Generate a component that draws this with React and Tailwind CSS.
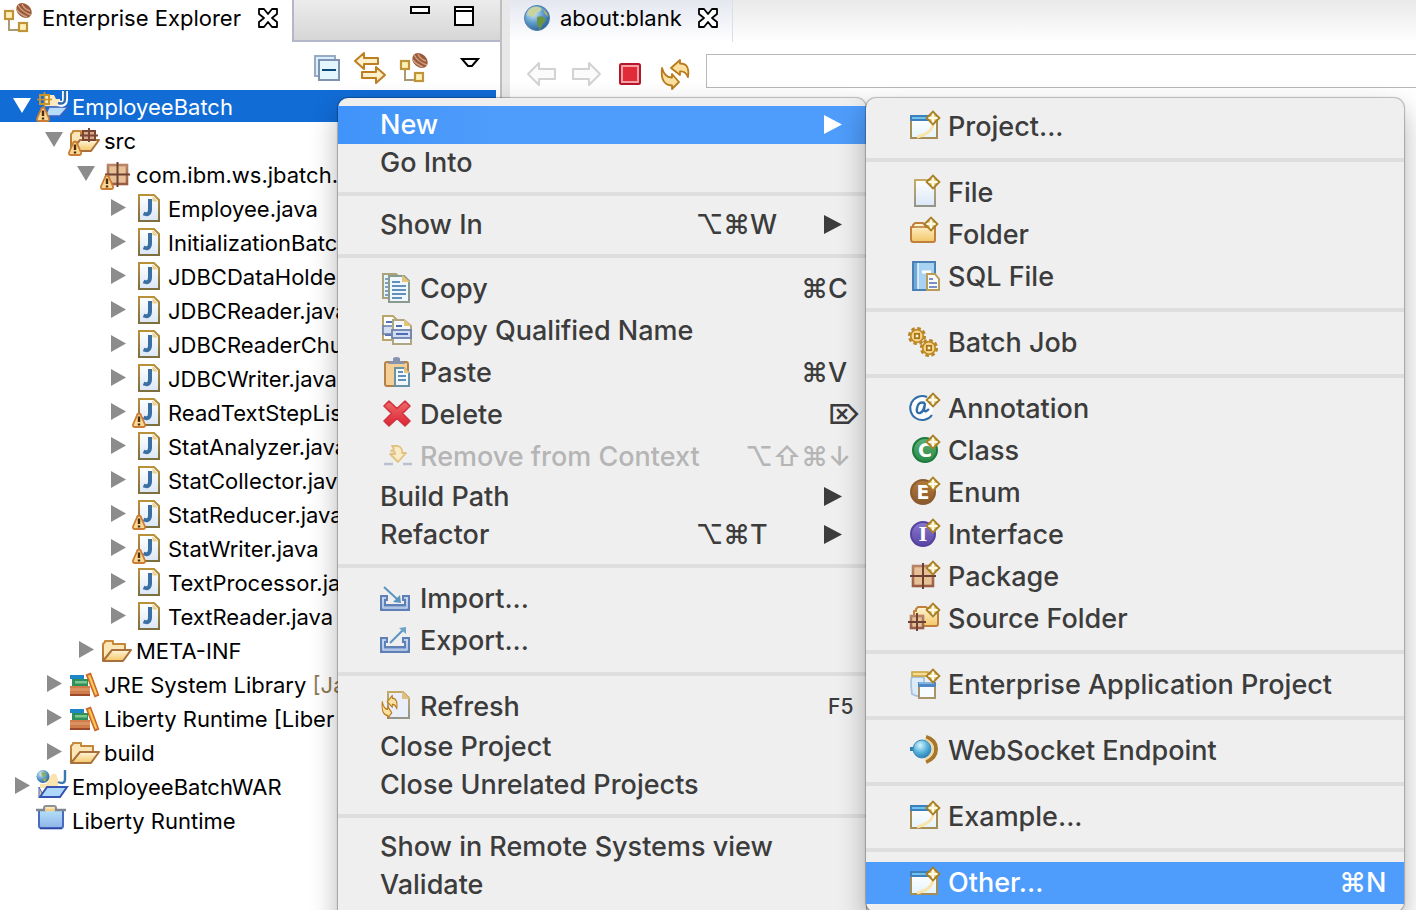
import React from "react";

/* ---------- shared drawing parts ---------- */

function Defs() {
  const g = (id, a, b) => (
    <linearGradient id={id} x1="0" y1="0" x2="0" y2="1">
      <stop offset="0" stopColor={a} />
      <stop offset="1" stopColor={b} />
    </linearGradient>
  );
  return (
    <svg className="absolute size-0" aria-hidden="true">
      <defs>
        {g("paper", "#ffffff", "#dbe6f6")}
        {g("paperEdge", "#b8913a", "#7d6f3e")}
        {g("softEdge", "#c4ab62", "#94948a")}
        {g("gold", "#fff6da", "#f3c766")}
        {g("goldEdge", "#c98a3c", "#a8742a")}
        {g("blue", "#cfe8fb", "#8fbdf0")}
        {g("case", "#b5e0f8", "#8fb4ea")}
        {g("pack", "#b98468", "#9b5c44")}
        {g("red", "#ef6a6a", "#dc2434")}
        {g("green", "#5cb176", "#2a8a46")}
        {g("brown", "#b5783a", "#8a5a2a")}
        {g("purple", "#8a7ad0", "#5a44a4")}
        {g("tray", "#c5d6ef", "#7f9dcd")}
        {g("win", "#ffffff", "#e3f4fd")}
        <radialGradient id="globe" cx="0.35" cy="0.3" r="0.8">
          <stop offset="0" stopColor="#d6ecf7" />
          <stop offset="0.5" stopColor="#5d9ccb" />
          <stop offset="1" stopColor="#25588f" />
        </radialGradient>
        <radialGradient id="ball" cx="0.4" cy="0.3" r="0.8">
          <stop offset="0" stopColor="#d9f4fd" />
          <stop offset="0.5" stopColor="#58b3dc" />
          <stop offset="1" stopColor="#1d6ea5" />
        </radialGradient>
      </defs>
    </svg>
  );
}

function Icon({ children }) {
  return (
    <svg viewBox="0 0 32 32" className="size-8 shrink-0 overflow-visible" aria-hidden="true">
      {children}
    </svg>
  );
}

const Spark = ({ x = 25, y = 7 }) => (
  <g transform={`translate(${x} ${y})`}>
    <path d="M0 -6.3L6.3 0L0 6.3L-6.3 0Z" fill="#ecd28c" stroke="#a87f24" strokeWidth="2" />
    <path d="M0 -4.500V4.500M-4.500 0H4.500" stroke="#fffbe8" strokeWidth="2.200" />
  </g>
);

const Warn = () => (
  <g>
    <path d="M7 17.5Q8.6 17.5 9.3 20L13 28.5Q13.6 31 11 31H3Q0.4 31 1 28.5L4.7 20Q5.4 17.5 7 17.5Z" fill="#fbd893" stroke="#cb7c35" strokeWidth="1.8" />
    <path d="M7 20.5V26M7 27.5V29.5" stroke="#4a2a08" strokeWidth="2.4" />
  </g>
);

const Letter = ({ x, y, size, fill, font, children }) => (
  <text x={x} y={y} fontSize={size} fontWeight="700" fill={fill} textAnchor="middle" fontFamily={`"${font}", sans-serif`}>
    {children}
  </text>
);

const Grid = ({ x, y, s }) => (
  <g transform={`translate(${x} ${y})`}>
    <rect x="1" y="1" width={s - 2} height={s - 2} fill="#e6c196" stroke="url(#pack)" strokeWidth="2.6" />
    <path d={`M${s / 2} -2V${s + 2}M-2 ${s / 2}H${s + 2}`} stroke="#6d4034" strokeWidth="2" />
  </g>
);

const OpenFolder = () => (
  <g strokeLinejoin="round" strokeWidth="2">
    <path d="M3 27V10L5 8V7H13V10H25V15" fill="#fbe6b8" stroke="url(#goldEdge)" />
    <path d="M3 27L12 16H31L23 27Z" fill="url(#gold)" stroke="#a8703a" />
  </g>
);

/* ---------- tree icons ---------- */

const JavaIcon = ({ warn }) => (
  <Icon>
    <path d="M7 3H22L27 8V29H7Z" fill="url(#paper)" stroke="url(#paperEdge)" strokeWidth="2" />
    <path d="M20.500 4V9.500H26Z" fill="#ecd08c" />
    <path d="M11.500 21.500Q18 24 18 17V7" fill="none" stroke="#3a6fa3" strokeWidth="4" />
    {warn && <Warn />}
  </Icon>
);

const ProjectIcon = () => (
  <Icon>
    <path d="M8 16V5H18L20 9H24V17Z" fill="#fde9bd" />
    <path d="M9 26L13 17H32L24 26Z" fill="#b5dcf8" stroke="#3d5fc0" strokeWidth="1.6" />
    <rect x="4" y="5" width="9" height="9" fill="none" stroke="#c8932c" strokeWidth="2" />
    <path d="M8.500 2V17M1 9.500H16" stroke="#c8932c" strokeWidth="1.600" />
    <path d="M22 13Q29 16 29 9V1" fill="none" stroke="#fff" strokeWidth="6" />
    <path d="M22 13Q29 15 29 9V0" fill="none" stroke="#2f6aa8" strokeWidth="2.400" />
    <Warn />
  </Icon>
);

const SrcIcon = () => (
  <Icon>
    <OpenFolder />
    <path d="M15 7H27V16H15ZM21 4V18M12 11.500H30" fill="#d9a988" stroke="#7a4636" strokeWidth="2" />
    <Warn />
  </Icon>
);

const PackageIcon = ({ warn }) => (
  <Icon>
    <Grid x={7} y={6} s={21} />
    {warn && <Warn />}
  </Icon>
);

const FolderIcon = () => (
  <Icon>
    <OpenFolder />
  </Icon>
);

const BooksIcon = () => (
  <Icon>
    <rect x="2" y="7" width="14" height="4" fill="#1e86c8" />
    <rect x="4" y="11" width="16" height="7" fill="#2f8f58" />
    <rect x="7" y="13" width="12" height="2.500" fill="#7cc893" />
    <rect x="2" y="18" width="20" height="8" fill="#cf7d4b" />
    <rect x="2" y="20" width="20" height="3" fill="#da9262" />
    <rect x="2" y="26" width="20" height="2" fill="#9c4a2a" />
    <path d="M18.500 7L22.500 5.500L30.500 27L27 28.500Z" fill="#eea53c" stroke="#c8652a" strokeWidth="1.400" />
    <path d="M21.500 8L28 26" stroke="#fbd25c" strokeWidth="1.400" />
  </Icon>
);

const WarIcon = () => (
  <Icon>
    <path d="M4 20V14H10L16 4H20L22 9V18H4Z" fill="#fbe3b0" />
    <path d="M3 27V17L8 27Z" fill="#f3d08c" stroke="#4a62b8" strokeWidth="1" />
    <path d="M4 27L11 17H31L24 27Z" fill="#aed8fa" stroke="#3552b5" strokeWidth="2" />
    <circle cx="7" cy="6.500" r="6.500" fill="url(#globe)" />
    <path d="M5 3L9 2L10 6L7 7ZM6 9L11 8L9 12Z" fill="#8fae56" />
    <path d="M22 12Q29 15 29 9V0" fill="none" stroke="#3b78ad" strokeWidth="2.400" />
  </Icon>
);

const CaseIcon = () => (
  <Icon>
    <path d="M8 6V4Q8 2 10 2H18Q20 2 20 4V6" fill="#fde6b6" stroke="#8a9198" strokeWidth="2" />
    <path d="M3 6H27V22Q27 24 25 24H5Q3 24 3 22Z" fill="url(#case)" stroke="#4a6cc0" strokeWidth="2" />
    <path d="M0 6H10M18 6H30" stroke="#7d8791" strokeWidth="2.400" />
    <path d="M9 6H19" stroke="#f3cf8a" strokeWidth="2.400" />
    <path d="M4 24.500H26" stroke="#2c47a4" strokeWidth="1.600" />
  </Icon>
);

/* ---------- toolbar and tab icons ---------- */

const TreeViewIcon = () => (
  <Icon>
    <path d="M7 16V28H18" fill="none" stroke="#a99a72" strokeWidth="2" />
    <rect x="3" y="9" width="8" height="8" fill="#fdf0b8" stroke="#c09438" strokeWidth="2.200" />
    <rect x="17" y="21" width="8" height="8" fill="#fdf0b8" stroke="#c09438" strokeWidth="2.200" />
    <ellipse cx="22" cy="8.500" rx="8.500" ry="6.500" transform="rotate(40 22 8.500)" fill="#9a5a3a" />
    <path d="M16 3Q20 10 29 13M20 2Q22 7 28 9M15 8Q19 13 25 15" fill="none" stroke="#d2a184" strokeWidth="1.400" />
  </Icon>
);

const CollapseIcon = () => (
  <Icon>
    <rect x="5" y="4" width="20" height="20" fill="#d6f0fc" stroke="#9aa9c4" strokeWidth="2" />
    <rect x="9" y="8" width="20" height="20" fill="#e4f6fd" stroke="#8192b0" strokeWidth="2" />
    <path d="M12 18H26" stroke="#0d4678" strokeWidth="2" />
  </Icon>
);

const LinkIcon = () => (
  <Icon>
    <g fill="#fdf0cb" stroke="#bd7f22" strokeWidth="2" strokeLinejoin="round">
      <path d="M10 1L1 9L10 17V12H24V6H10Z" />
      <path d="M22 15L31 23L22 31V26H8V20H22Z" />
    </g>
  </Icon>
);

const NavArrow = ({ flip }) => (
  <Icon>
    <path
      d={flip ? "M19 5L30 16L19 27V21H3V11H19Z" : "M13 5L2 16L13 27V21H29V11H13Z"}
      fill="#fbfbfb"
      stroke="#d2d2d2"
      strokeWidth="2"
      strokeLinejoin="round"
    />
  </Icon>
);

const StopIcon = () => (
  <Icon>
    <rect x="6" y="6" width="20" height="20" rx="1.500" fill="#f3a3a5" stroke="#b8162c" strokeWidth="2" />
    <rect x="9" y="9" width="14" height="14" fill="#e22b38" />
  </Icon>
);

const Swirl = () => (
  <g fill="#fbe0a0" stroke="#b97a1c" strokeWidth="1.800" strokeLinejoin="round">
    <path d="M22 2L13 10L22 17V13.500Q27 12.500 30 19Q32 5 22 5.500Z" />
    <path d="M14 16L21 24L14 31V27.500Q2 27 4 10Q7 20 14 19.500Z" />
  </g>
);

const CloseX = () => (
  <svg viewBox="0 0 20 20" className="size-5" aria-hidden="true">
    <path d="M1 1H6L10 6L14 1H19V6L14 10L19 14V19H14L10 14L6 19H1V14L6 10L1 6Z" fill="#fff" stroke="#000" strokeWidth="1.800" strokeLinejoin="round" />
  </svg>
);

const GlobeIcon = () => (
  <svg viewBox="0 0 26 26" className="size-[26px]" aria-hidden="true">
    <circle cx="13" cy="13" r="12.500" fill="url(#globe)" stroke="#4e7fae" strokeWidth="1" />
    <path d="M4 6Q8 1 15 2L18 4L15 7L12 8L11 11L8 12L6 10L3 11Z" fill="#c9d3a0" />
    <path d="M13 12L18 11L22 15L18 20L16 25L13 19Z" fill="#6d9440" />
    <path d="M19 4L23 8L24 12L21 9Z" fill="#b9b56c" />
  </svg>
);

/* ---------- menu icons ---------- */

const CopyIcon = () => (
  <Icon>
    <path d="M3 1H16L20 5V25H3Z" fill="#e5f3fb" stroke="#a9a27a" strokeWidth="2" />
    <path d="M5 6H8M5 10H8M5 14H8M5 18H8M5 22H8" stroke="#5e86ac" strokeWidth="1.600" />
    <path d="M9 3H24L29 8V29H9Z" fill="#eef7fd" stroke="#8a9a8c" strokeWidth="2" />
    <path d="M22 2V9H30Z" fill="#e6c676" />
    <path d="M12 9H20M12 13H26M12 17H26M12 21H26M12 25H22" stroke="#6390b8" strokeWidth="1.800" />
  </Icon>
);

const CopyNameIcon = () => (
  <Icon>
    <path d="M3 1H13L19 7V25H3Z" fill="#fff" stroke="#b9a66a" strokeWidth="2" />
    <path d="M6 7H12M5 16H12M5 20H12" stroke="#5773b5" strokeWidth="1.800" />
    <rect x="3" y="11" width="15" height="8" fill="#d4def2" stroke="#7182ac" strokeWidth="1.600" />
    <path d="M13 5H24L31 11V29H13Z" fill="#f4f8fd" stroke="#b0a680" strokeWidth="2" />
    <path d="M24 4V11H31Z" fill="#e6c676" />
    <rect x="12" y="15" width="19" height="8" fill="#cfdcf2" stroke="#6f80aa" strokeWidth="1.800" />
    <path d="M16 11H22M16 19H28" stroke="#4f6cb2" strokeWidth="1.800" />
  </Icon>
);

const PasteIcon = () => (
  <Icon>
    <rect x="5" y="5" width="23" height="24" rx="2" fill="#f4d096" stroke="#b3814c" strokeWidth="2" />
    <path d="M8 7H25L23 4H20V2Q20 0 16.500 0Q13 0 13 2V4H10Z" fill="#8793ae" />
    <path d="M15 11H24L29 16V29H15Z" fill="#f2f9fd" stroke="#6b93a8" strokeWidth="2" />
    <path d="M24 10V16H30Z" fill="#e6c676" />
    <path d="M18 15H23M18 19H26M18 23H26" stroke="#6390b8" strokeWidth="1.800" />
  </Icon>
);

const DeleteIcon = () => (
  <Icon>
    <path d="M9 2L17 9.500L25 2L30 7L22.500 14.500L30 22L25 27L17 19.500L9 27L4 22L11.500 14.500L4 7Z" fill="url(#red)" stroke="#d03440" strokeWidth="1.600" strokeLinejoin="round" />
  </Icon>
);

const RemoveIcon = () => (
  <Icon>
    <path d="M4 23H13M23 23H32" stroke="#b9c0cf" strokeWidth="2.400" />
    <path d="M12 5H18Q23 7 22 12H26L18 21L10 13H15Q16 10 11 10L14 8Z" fill="#f8ebc6" stroke="#e2c282" strokeWidth="1.800" strokeLinejoin="round" />
  </Icon>
);

const Tray = () => (
  <g>
    <path d="M1 13H7V17H5V22H25V17H23V13H29V27H1Z" fill="url(#tray)" stroke="#5f80b6" strokeWidth="2" />
    <path d="M3 15V25H27V15" fill="none" stroke="#d5e2f5" strokeWidth="1" />
  </g>
);

const ImportIcon = () => (
  <Icon>
    <Tray />
    <path d="M4 4L17 16" stroke="#5a94bf" strokeWidth="2" />
    <path d="M21 20L13 19L20 12Z" fill="#5a94bf" />
  </Icon>
);

const ExportIcon = () => (
  <Icon>
    <Tray />
    <path d="M10 18L23 5" stroke="#5a94bf" strokeWidth="2" />
    <path d="M26 2V9L19 3Z" fill="#6fa3c8" />
  </Icon>
);

const RefreshDocIcon = () => (
  <Icon>
    <path d="M8 1H23L29 7V27H8Z" fill="#e9eef9" stroke="url(#softEdge)" strokeWidth="2" />
    <path d="M22 0V8H30Z" fill="#dcc182" />
    <g transform="translate(0 3) scale(0.560 0.780)">
      <Swirl />
    </g>
  </Icon>
);

const WizardIcon = () => (
  <Icon>
    <rect x="3" y="7" width="26" height="20" fill="url(#win)" stroke="#a58d55" strokeWidth="2" />
    <path d="M25 12Q25 22 9 26" fill="none" stroke="#fbe3ac" strokeWidth="3" />
    <rect x="2" y="4" width="20" height="6" fill="#3f7fbb" />
    <rect x="4" y="6" width="17" height="2" fill="#6cc3ec" />
    <Spark />
  </Icon>
);

const FileIcon = () => (
  <Icon>
    <rect x="7" y="3" width="20" height="26" fill="url(#paper)" stroke="url(#softEdge)" strokeWidth="2" />
    <Spark y={5} />
  </Icon>
);

const ClosedFolder = () => (
  <path d="M3 8V20Q3 23 5 23H25Q27 23 27 21V8H17V6L15 4H7L5 6V8Z" fill="url(#gold)" stroke="#c0803c" strokeWidth="2" strokeLinejoin="round" />
);

const NewFolderIcon = () => (
  <Icon>
    <ClosedFolder />
    <path d="M5 8H16" stroke="#c0803c" strokeWidth="1.600" />
    <Spark x={23} y={5} />
  </Icon>
);

const SqlIcon = () => (
  <Icon>
    <rect x="5" y="1" width="22" height="28" fill="#a7d2f2" stroke="#4a80b4" strokeWidth="2" />
    <rect x="6" y="2" width="4" height="26" fill="#6faad8" />
    <path d="M10 2V28" stroke="#e6f4fd" strokeWidth="1.600" />
    <path d="M14 11H23" stroke="#fff" strokeWidth="3" />
    <path d="M19 13H27L31 18V29H19Z" fill="#fbfbf6" stroke="#b99c58" strokeWidth="2" />
    <path d="M21 18H25M21 22H29M21 26H29" stroke="#7b90c8" strokeWidth="1.800" />
  </Icon>
);

const Gear = ({ x, y }) => (
  <g transform={`translate(${x} ${y})`}>
    <circle r="7.600" fill="none" stroke="#b8862a" strokeWidth="3" strokeDasharray="3.500 2.470" />
    <circle r="6.300" fill="#f9d98b" stroke="#c08a26" strokeWidth="1.800" />
    <rect x="-2.200" y="-2.200" width="4.400" height="4.400" fill="#fff3d0" stroke="#a8741a" strokeWidth="1.800" />
  </g>
);

const GearsIcon = () => (
  <Icon>
    <Gear x={9} y={9} />
    <Gear x={21} y={21} />
  </Icon>
);

const AnnotationIcon = () => (
  <Icon>
    <circle cx="14" cy="15" r="11" fill="#fff" />
    <path d="M24 22A12 12 0 1 1 19 4" fill="none" stroke="#2f6ea8" strokeWidth="2" />
    <path d="M17 10Q10 8 9 15Q8 21 12 20Q16 19 17 10L16 17Q17 20 21 16" fill="none" stroke="#2f6ea8" strokeWidth="2.400" />
    <Spark />
  </Icon>
);

const LetterIcon = ({ x, fill, edge, letter, font = "DejaVu Sans" }) => (
  <Icon>
    <circle cx={x} cy="15" r="12" fill={fill} stroke={edge} strokeWidth="2" />
    <Letter x={x} y="22" size="19" fill="#fff" font={font}>
      {letter}
    </Letter>
    <Spark />
  </Icon>
);

const NewPackageIcon = () => (
  <Icon>
    <Grid x={4} y={4} s={22} />
    <Spark />
  </Icon>
);

const SourceFolderIcon = () => (
  <Icon>
    <g transform="translate(3 0)">
      <ClosedFolder />
    </g>
    <Grid x={2} y={12} s={14} />
    <Spark />
  </Icon>
);

const EnterpriseIcon = () => (
  <Icon>
    <path d="M4 8Q2 10 4 25L9 27H16V8Z" fill="#dcebf8" stroke="#a9c2dc" strokeWidth="1.800" />
    <rect x="4" y="3" width="16" height="4" fill="#f5dd94" stroke="#cda545" strokeWidth="1.600" />
    <rect x="11" y="16" width="16" height="13" fill="#f6fbff" stroke="#a89468" strokeWidth="2" />
    <rect x="10" y="13" width="18" height="5" fill="#4f87c4" />
    <path d="M11 14H26" stroke="#9fc7ea" strokeWidth="1.400" />
    <Spark />
  </Icon>
);

const SocketIcon = () => (
  <Icon>
    <path d="M18 2Q28 5 28 14Q28 23 18 27" fill="none" stroke="#a8762a" strokeWidth="4" />
    <path d="M17 4Q25 8 25 14Q25 20 17 25" fill="none" stroke="#f1d79c" strokeWidth="2" />
    <path d="M2 14H8" stroke="#2c7fb0" strokeWidth="4" />
    <circle cx="14" cy="14" r="9" fill="url(#ball)" stroke="#3b8cba" strokeWidth="1" />
  </Icon>
);

/* ---------- tree ---------- */

const TREE = [
  { level: 0, open: true, icon: <ProjectIcon />, label: "EmployeeBatch", selected: true },
  { level: 1, open: true, icon: <SrcIcon />, label: "src" },
  { level: 2, open: true, icon: <PackageIcon warn />, label: "com.ibm.ws.jbatch." },
  { level: 3, icon: <JavaIcon />, label: "Employee.java" },
  { level: 3, icon: <JavaIcon />, label: "InitializationBatc" },
  { level: 3, icon: <JavaIcon />, label: "JDBCDataHolde" },
  { level: 3, icon: <JavaIcon />, label: "JDBCReader.java" },
  { level: 3, icon: <JavaIcon />, label: "JDBCReaderChu" },
  { level: 3, icon: <JavaIcon />, label: "JDBCWriter.java" },
  { level: 3, icon: <JavaIcon warn />, label: "ReadTextStepLis" },
  { level: 3, icon: <JavaIcon />, label: "StatAnalyzer.java" },
  { level: 3, icon: <JavaIcon />, label: "StatCollector.jav" },
  { level: 3, icon: <JavaIcon warn />, label: "StatReducer.java" },
  { level: 3, icon: <JavaIcon warn />, label: "StatWriter.java" },
  { level: 3, icon: <JavaIcon />, label: "TextProcessor.ja" },
  { level: 3, icon: <JavaIcon />, label: "TextReader.java" },
  { level: 2, icon: <FolderIcon />, label: "META-INF" },
  { level: 1, icon: <BooksIcon />, label: "JRE System Library", note: "[Ja" },
  { level: 1, icon: <BooksIcon />, label: "Liberty Runtime [Liber" },
  { level: 1, icon: <FolderIcon />, label: "build" },
  { level: 0, icon: <WarIcon />, label: "EmployeeBatchWAR" },
  { level: 0, leaf: true, icon: <CaseIcon />, label: "Liberty Runtime" },
];

const INDENT = ["pl-3", "pl-11", "pl-[76px]", "pl-[108px]"];

function TreeRow({ level, open, leaf, icon, label, note, selected }) {
  return (
    <li
      role="treeitem"
      aria-level={level + 1}
      aria-expanded={leaf ? undefined : !!open}
      aria-selected={!!selected}
      className={`flex h-[34px] items-center gap-1 whitespace-nowrap border-y border-transparent bg-clip-padding ${INDENT[level]} ${
        selected ? "bg-[#116cd6] text-white" : "text-black"
      }`}
    >
      <svg viewBox="0 0 20 20" className={`size-5 shrink-0 ${selected ? "fill-white" : "fill-[#8c8c8c]"}`} aria-hidden="true">
        {!leaf && <path d={open ? "M1 2H19L10 17Z" : "M3 1L18 9.500L3 18Z"} />}
      </svg>
      {icon}
      <span className="pt-[2px]">
        {label}
        {note && <span className="text-[#8f7a52]"> {note}</span>}
      </span>
    </li>
  );
}

/* ---------- menus ---------- */

const MAIN_MENU = [
  [{ label: "New", sub: true, active: true }, { label: "Go Into" }],
  [{ label: "Show In", mods: "⌥⌘", k: "W", sub: true }],
  [
    { label: "Copy", icon: <CopyIcon />, mods: "⌘", k: "C" },
    { label: "Copy Qualified Name", icon: <CopyNameIcon /> },
    { label: "Paste", icon: <PasteIcon />, mods: "⌘", k: "V" },
    { label: "Delete", icon: <DeleteIcon />, k: "⌦" },
    { label: "Remove from Context", icon: <RemoveIcon />, mods: "⌥⇧⌘", k: "↓", disabled: true },
    { label: "Build Path", sub: true },
    { label: "Refactor", mods: "⌥⌘", k: "T", sub: true },
  ],
  [
    { label: "Import...", icon: <ImportIcon /> },
    { label: "Export...", icon: <ExportIcon /> },
  ],
  [{ label: "Refresh", icon: <RefreshDocIcon />, k: "F5", small: true }, { label: "Close Project" }, { label: "Close Unrelated Projects" }],
  [{ label: "Show in Remote Systems view" }, { label: "Validate" }],
];

const NEW_MENU = [
  [{ label: "Project...", icon: <WizardIcon /> }],
  [
    { label: "File", icon: <FileIcon /> },
    { label: "Folder", icon: <NewFolderIcon /> },
    { label: "SQL File", icon: <SqlIcon /> },
  ],
  [{ label: "Batch Job", icon: <GearsIcon /> }],
  [
    { label: "Annotation", icon: <AnnotationIcon /> },
    { label: "Class", icon: <LetterIcon x={17} fill="url(#green)" edge="#1c7a3e" letter="C" /> },
    { label: "Enum", icon: <LetterIcon x={15} fill="url(#brown)" edge="#8a5a30" letter="E" /> },
    { label: "Interface", icon: <LetterIcon x={15} fill="url(#purple)" edge="#5542a0" letter="I" font="DejaVu Serif" /> },
    { label: "Package", icon: <NewPackageIcon /> },
    { label: "Source Folder", icon: <SourceFolderIcon /> },
  ],
  [{ label: "Enterprise Application Project", icon: <EnterpriseIcon /> }],
  [{ label: "WebSocket Endpoint", icon: <SocketIcon /> }],
  [{ label: "Example...", icon: <WizardIcon /> }],
  [{ label: "Other...", icon: <WizardIcon />, mods: "⌘", k: "N", active: true }],
];

function MenuItem({ label, icon, mods, k, small, sub, active, disabled }) {
  const tone = active ? "bg-[#4e9cfb] text-white" : disabled ? "text-[#b5b5b5]" : "text-[#3c3c3c]";
  const fade = active && sub ? "bg-linear-to-r from-[#4093fa] to-[#4e9cfb] to-30%" : "";
  return (
    <button
      type="button"
      role="menuitem"
      disabled={disabled}
      className={`flex w-full items-center gap-2 whitespace-nowrap pl-[42px] text-left ${icon ? "h-[42px]" : "h-[38px]"} ${tone} ${fade}`}
    >
      {icon}
      <span className="grow">{label}</span>
      {k && (
        <span className="flex items-center">
          <span>{mods}</span>
          <span className={`w-[38px] ${small ? "text-[21px]" : ""}`}>{k}</span>
        </span>
      )}
      {sub && (
        <svg viewBox="0 0 18 20" className="ml-7 mr-6 h-5 w-[18px] fill-current" aria-hidden="true">
          <path d="M0 0L18 9.500L0 19Z" />
        </svg>
      )}
    </button>
  );
}

function Menu({ label, groups, className }) {
  return (
    <div
      role="menu"
      aria-label={label}
      className={`absolute rounded-[10px] bg-[#efefef] py-2 text-[27px] leading-8 font-[450] shadow-[0_0_1px_1px_rgba(0,0,0,0.25),0_12px_28px_rgba(0,0,0,0.3)] ${className}`}
    >
      {groups.map((items, i) => (
        <div key={i} role="group">
          {i > 0 && <hr className="my-[10px] h-1 border-0 bg-[#dedede]" />}
          {items.map((item) => (
            <MenuItem key={item.label} {...item} />
          ))}
        </div>
      ))}
    </div>
  );
}

/* ---------- page ---------- */

function ExplorerPanel() {
  return (
    <aside className="flex w-[502px] shrink-0 flex-col border-r-2 border-[#bfbfbf] bg-white">
      <header className="flex h-[42px]">
        <div className="flex w-[292px] items-center pb-[6px]">
          <div className="pl-[2px]">
            <TreeViewIcon />
          </div>
          <h1 className="ml-2 grow whitespace-nowrap">Enterprise Explorer</h1>
          <button type="button" aria-label="Close view" className="mr-[14px]">
            <CloseX />
          </button>
        </div>
        <div className="flex grow items-start justify-end gap-6 border-b-2 border-l-2 border-[#b4b7c9] bg-linear-to-b from-[#ececec] to-[#d6d6d6] pt-[6px] pr-[26px]">
          <button type="button" aria-label="Minimize" className="h-2 w-5 border-2 border-black bg-white" />
          <button type="button" aria-label="Maximize">
            <svg viewBox="0 0 20 20" className="size-5" aria-hidden="true">
              <path d="M1 1H19V19H1Z" fill="#fff" stroke="#000" strokeWidth="2" />
              <path d="M1 5H19" stroke="#000" strokeWidth="2" />
            </svg>
          </button>
        </div>
      </header>
      <div className="flex h-[47px] items-center justify-end gap-3 pt-1 pr-[14px]">
        <button type="button" aria-label="Collapse all">
          <CollapseIcon />
        </button>
        <button type="button" aria-label="Link with editor">
          <LinkIcon />
        </button>
        <button type="button" aria-label="Java EE tree">
          <TreeViewIcon />
        </button>
        <button type="button" aria-label="View menu" className="ml-3">
          <Icon>
            <path d="M8 7H24L18 14H14Z" fill="#fff" stroke="#000" strokeWidth="2" />
          </Icon>
        </button>
      </div>
      <ul role="tree" aria-label="Projects" className="mr-1">
        {TREE.map((row, i) => (
          <TreeRow key={i} {...row} />
        ))}
      </ul>
    </aside>
  );
}

function BrowserPanel() {
  return (
    <main className="min-w-0 grow bg-white">
      <header className="flex h-[42px] bg-linear-to-b from-[#e9e9e9] to-white">
        <div className="flex items-center gap-[10px] border-r border-[#dcdde6] bg-linear-to-b from-[#e4e7f0] to-white px-[14px] pb-[6px]">
          <GlobeIcon />
          <h2 className="w-[128px] whitespace-nowrap">about:blank</h2>
          <button type="button" aria-label="Close tab">
            <CloseX />
          </button>
        </div>
      </header>
      <div className="flex items-start gap-3 pt-3 pl-4">
        <div className="flex gap-3 pt-1">
          <button type="button" aria-label="Back">
            <NavArrow />
          </button>
          <button type="button" aria-label="Forward">
            <NavArrow flip />
          </button>
          <button type="button" aria-label="Stop">
            <StopIcon />
          </button>
          <button type="button" aria-label="Refresh page">
            <Icon>
              <Swirl />
            </Icon>
          </button>
        </div>
        <input
          type="text"
          aria-label="Address"
          className="ml-1 h-[34px] min-w-0 grow border border-r-0 border-[#b8b8b8] bg-white px-2 outline-none"
        />
      </div>
    </main>
  );
}

export default function App() {
  return (
    <div className="relative flex h-screen overflow-hidden bg-[#e8e8e8] font-['Inter','DejaVu_Sans',sans-serif] text-[22px] leading-7 text-black">
      <Defs />
      <ExplorerPanel />
      <div className="w-2 shrink-0" />
      <BrowserPanel />
      <Menu label="Project actions" groups={MAIN_MENU} className="left-[338px] top-[98px] min-h-full w-[528px]" />
      <Menu label="New" groups={NEW_MENU} className="left-[866px] top-[98px] w-[538px]" />
    </div>
  );
}
